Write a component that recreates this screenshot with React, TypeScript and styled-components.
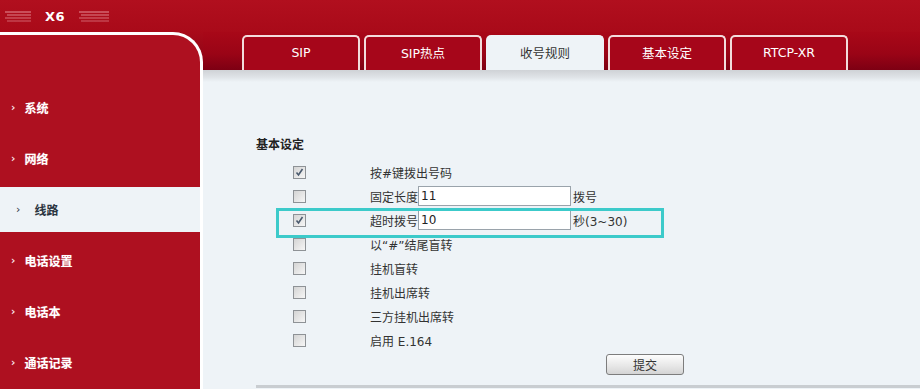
import React from 'react';
import styled, { createGlobalStyle } from 'styled-components';

const GlobalStyle = createGlobalStyle`
  html, body {
    margin: 0;
    padding: 0;
    width: 920px;
    height: 389px;
    overflow: hidden;
    background: #eef3f7;
    font-family: "DejaVu Sans", "Noto Sans CJK SC", sans-serif;
    font-size: 12px;
  }
  * { box-sizing: border-box; }
`;

const Page = styled.div`
  width: 920px;
  height: 389px;
  display: flex;
  flex-direction: column;
`;

const TopBar = styled.div`
  height: 32px;
  flex: none;
  display: flex;
  align-items: center;
  gap: 14px;
  padding-left: 5px;
  background: linear-gradient(180deg, #b10f1e 0%, #a90a19 100%);
`;

const Logo = styled.span`
  color: #fff;
  font-family: "DejaVu Sans", sans-serif;
  font-weight: bold;
  font-size: 13px;
  letter-spacing: 0.5px;
`;

const Body = styled.div`
  flex: 1;
  display: flex;
  background: linear-gradient(180deg, #a90a19 0px, #8e0416 30px, #7a0012 38px);
`;

const Sidebar = styled.nav`
  width: 203px;
  flex: none;
  background: #ae1020;
  border-top: 3px solid #fff;
  border-right: 3px solid #fff;
  border-top-right-radius: 30px;
  padding-top: 50px;
  display: flex;
  flex-direction: column;
  gap: 6px;
`;

const NavItem = styled.div<{ $active?: boolean }>`
  height: 45px;
  display: flex;
  align-items: center;
  padding-left: ${({ $active }) => ($active ? '16px' : '11px')};
  gap: ${({ $active }) => ($active ? '14px' : '9px')};
  background: ${({ $active }) => ($active ? '#eef3f7' : 'transparent')};
  color: ${({ $active }) => ($active ? '#2a3440' : '#fff')};
  font-weight: bold;
  font-size: 12px;
  text-shadow: ${({ $active }) => ($active ? 'none' : '0 0 1px rgba(255,255,255,0.4)')};
`;

const Arrow = styled.span`
  font-size: 11px;
  font-weight: normal;
  line-height: 1;
`;

const Main = styled.div`
  flex: 1;
  display: flex;
  flex-direction: column;
`;

const TabBar = styled.div`
  height: 38px;
  flex: none;
  display: flex;
  align-items: flex-end;
  gap: 4px;
  padding-left: 39px;
  background: linear-gradient(180deg, #a80818 0px, #9a0416 22px, #7d0013 38px);
`;

const Tab = styled.div<{ $active?: boolean }>`
  width: 118px;
  height: 35px;
  display: flex;
  align-items: center;
  justify-content: center;
  padding-bottom: 2px;
  border: 2px solid ${({ $active }) => ($active ? '#eef3f7' : '#f3dcdc')};
  border-bottom: none;
  border-radius: 5px 5px 0 0;
  background: ${({ $active }) => ($active ? '#eef3f7' : '#a6061a')};
  color: ${({ $active }) => ($active ? '#333' : '#fff')};
  font-size: 12.5px;
`;

const Strip = styled.div`
  height: 12px;
  flex: none;
  background: linear-gradient(180deg, #cfd2d6 0%, #dfe3e7 60%, #eef3f7 100%);
`;

const Content = styled.div`
  flex: 1;
  position: relative;
  padding: 53px 0 0 53px;
  background: #eef3f7;
  color: #333;
`;

const Heading = styled.div`
  height: 20px;
  line-height: 20px;
  font-weight: bold;
  color: #222;
  margin-bottom: 5px;
`;

const Row = styled.div`
  height: 24px;
  display: flex;
  align-items: center;
`;

const CheckBox = styled.span<{ $checked?: boolean }>`
  flex: none;
  margin-left: 37px;
  margin-right: 64px;
  width: 13px;
  height: 13px;
  border: 1px solid #8e9296;
  background: linear-gradient(135deg, #d4d4d4 0%, #f6f6f6 100%);
  display: flex;
  align-items: center;
  justify-content: center;
`;

const Label = styled.div`
  display: flex;
  align-items: center;
  white-space: nowrap;
  color: #333;
`;

const TextInput = styled.div`
  width: 153px;
  height: 20px;
  border: 1px solid #9aa3ab;
  background: #fff;
  padding-left: 2px;
  line-height: 18px;
  margin-right: 2px;
  color: #222;
`;

const Actions = styled.div`
  padding-left: 350px;
  margin-top: 2px;
`;

const SubmitButton = styled.button`
  width: 78px;
  height: 21px;
  border: 1px solid #7d7d7d;
  border-radius: 3px;
  background: linear-gradient(180deg, #fdfdfd 0%, #e6e6e6 60%, #d4d4d4 100%);
  font-family: "DejaVu Sans", "Noto Sans CJK SC", sans-serif;
  font-size: 12px;
  color: #333;
  padding: 0;
`;

const BottomLine = styled.div`
  margin-top: 10px;
  height: 3px;
  background: #c9cdd1;
`;

const Highlight = styled.div`
  position: absolute;
  left: 73px;
  top: 126px;
  width: 388px;
  height: 30px;
  border: 3px solid #3ccaca;
  pointer-events: none;
`;

const Stripes = ({ w }: { w: number }) => (
  <svg width={w} height="14" viewBox={`0 0 ${w} 14`}>
    {[3, 6, 9, 12].map((y, i) => (
      <line key={y} x1={i % 2 ? 2 : 0} y1={y} x2={w} y2={y} stroke="#f0a8ae" strokeWidth="1" opacity={0.85 - i * 0.1} />
    ))}
  </svg>
);

const Check = () => (
  <svg width="9" height="9" viewBox="0 0 9 9">
    <path d="M1.5 4.5 L3.5 7 L7.5 1" fill="none" stroke="#4a5a6e" strokeWidth="1.6" />
  </svg>
);

const navItems = ['系统', '网络', '线路', '电话设置', '电话本', '通话记录'];
const tabs = ['SIP', 'SIP热点', '收号规则', '基本设定', 'RTCP-XR'];

type Option = { checked: boolean; label: string; input?: string; suffix?: string };

const options: Option[] = [
  { checked: true, label: '按#键拨出号码' },
  { checked: false, label: '固定长度', input: '11', suffix: '拨号' },
  { checked: true, label: '超时拨号', input: '10', suffix: '秒(3~30)' },
  { checked: false, label: '以“#”结尾盲转' },
  { checked: false, label: '挂机盲转' },
  { checked: false, label: '挂机出席转' },
  { checked: false, label: '三方挂机出席转' },
  { checked: false, label: '启用 E.164' },
];

export default function App() {
  return (
    <Page>
      <GlobalStyle />
      <TopBar>
        <Stripes w={26} />
        <Logo>X6</Logo>
        <Stripes w={30} />
      </TopBar>
      <Body>
        <Sidebar>
          {navItems.map((item) => (
            <NavItem key={item} $active={item === '线路'}>
              <Arrow>›</Arrow>
              {item}
            </NavItem>
          ))}
        </Sidebar>
        <Main>
          <TabBar>
            {tabs.map((t) => (
              <Tab key={t} $active={t === '收号规则'}>
                {t}
              </Tab>
            ))}
          </TabBar>
          <Strip />
          <Content>
            <Heading>基本设定</Heading>
            {options.map((o) => (
              <Row key={o.label}>
                <CheckBox $checked={o.checked}>{o.checked && <Check />}</CheckBox>
                <Label>
                  {o.label}
                  {o.input !== undefined && <TextInput>{o.input}</TextInput>}
                  {o.suffix}
                </Label>
              </Row>
            ))}
            <Actions>
              <SubmitButton>提交</SubmitButton>
            </Actions>
            <BottomLine />
            <Highlight />
          </Content>
        </Main>
      </Body>
    </Page>
  );
}
